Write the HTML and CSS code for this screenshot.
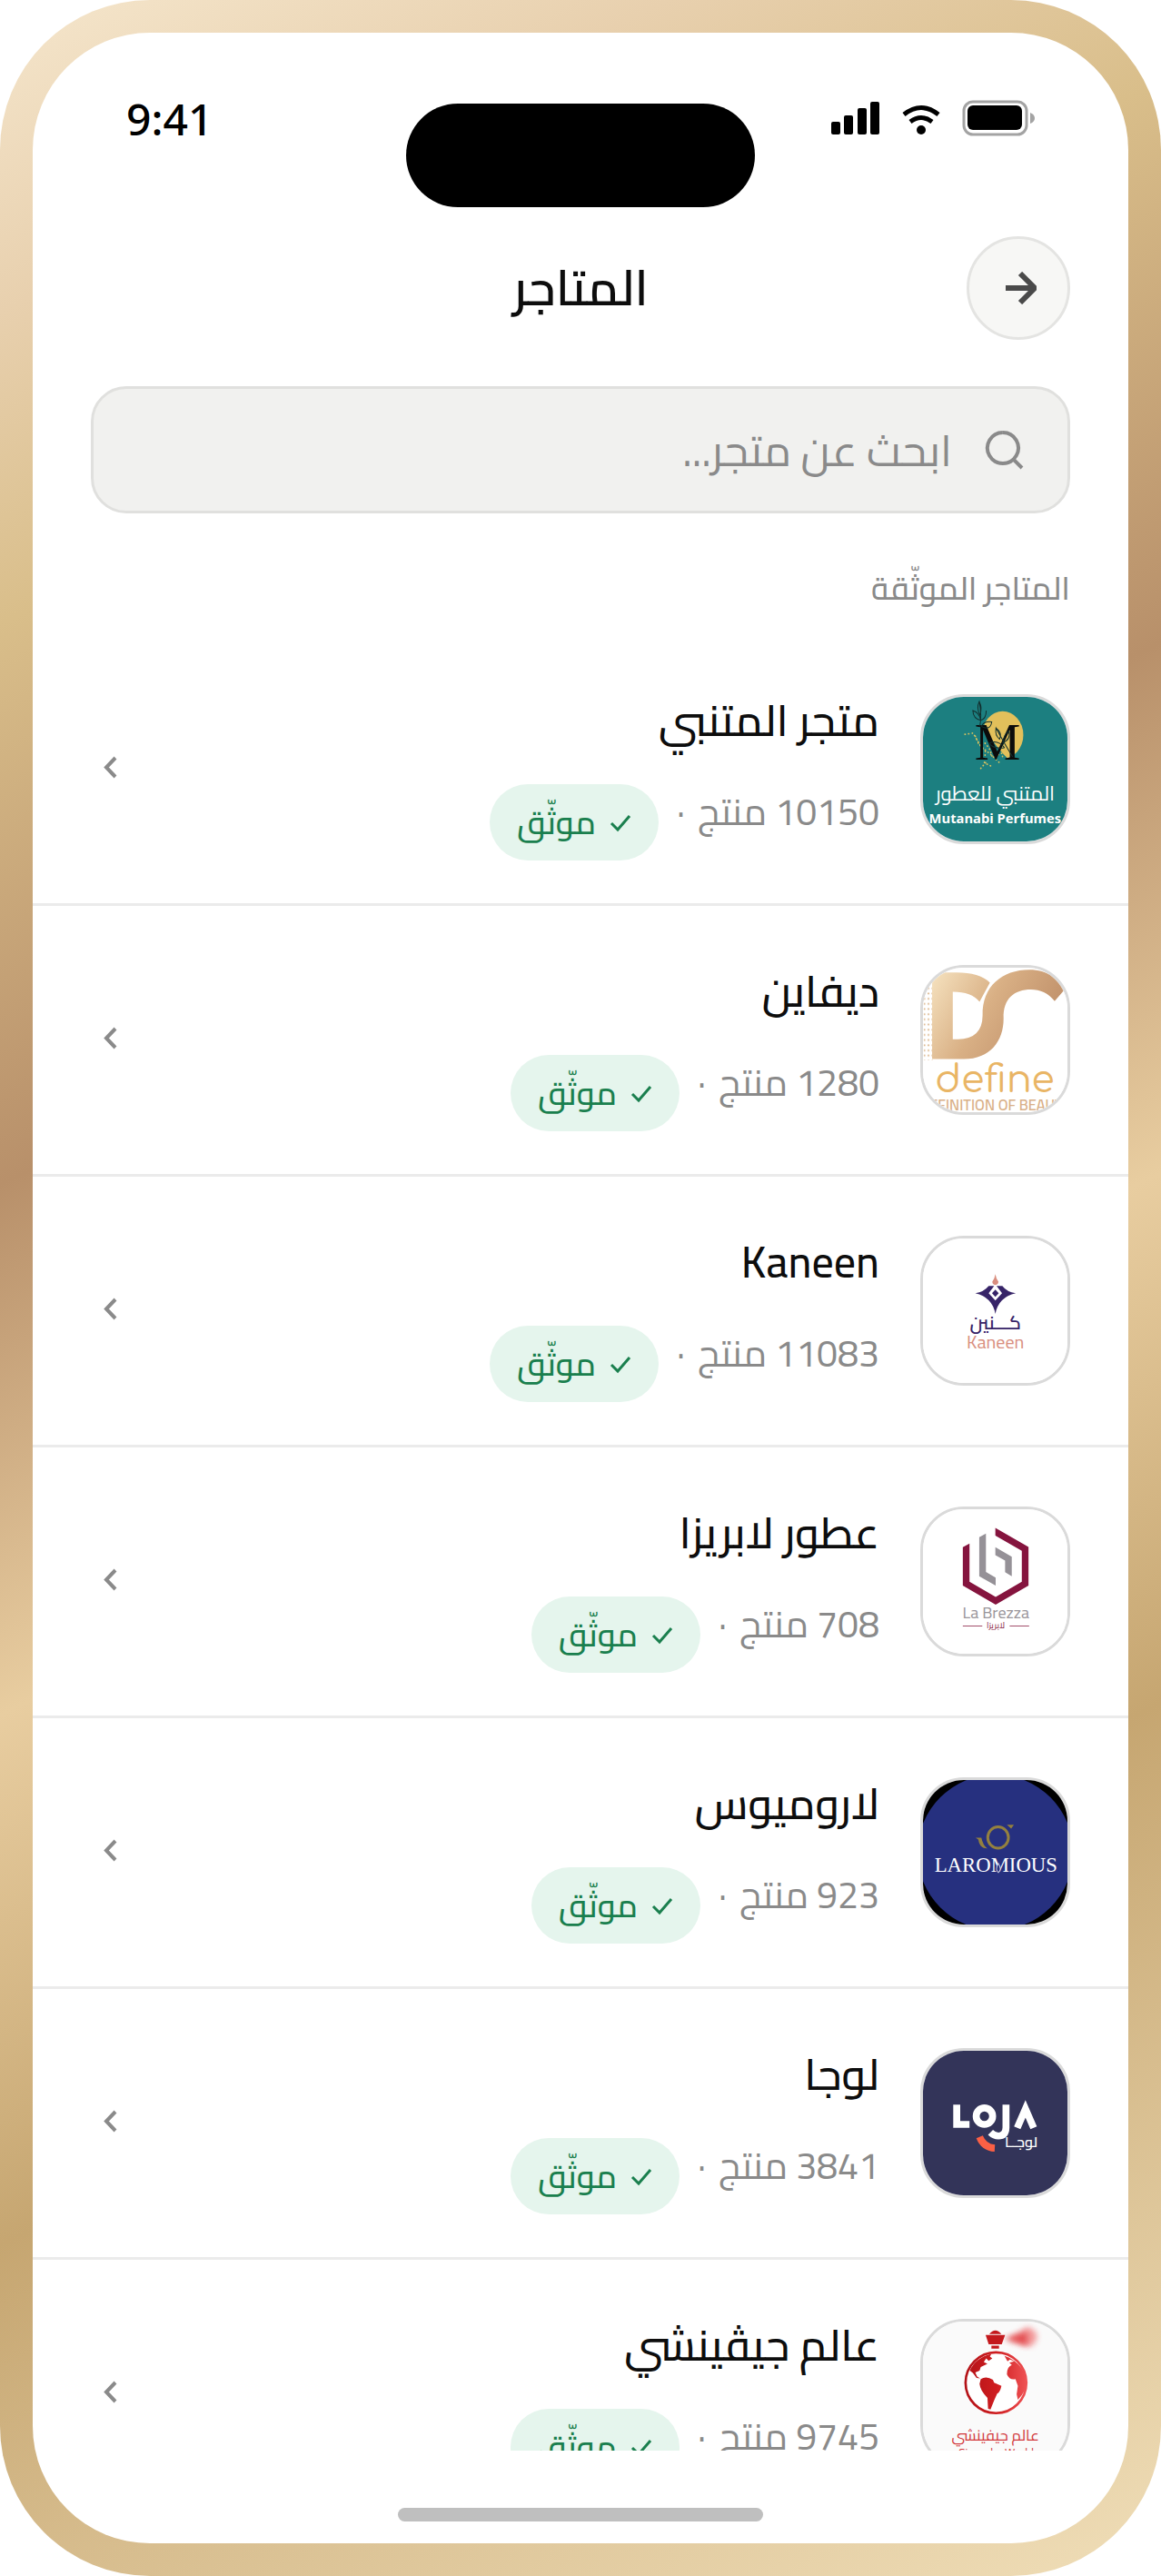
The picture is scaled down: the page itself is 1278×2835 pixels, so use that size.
FILE: index.html
```html
<!DOCTYPE html>
<html lang="ar" dir="rtl">
<head>
<meta charset="UTF-8" />
<meta name="viewport" content="width=device-width, initial-scale=1" />
<title>المتاجر</title>
<link rel="stylesheet" href="styles.css">
</head>
<body>

<svg class="sprite" aria-hidden="true">
  <symbol id="icon-check" viewBox="0 0 24 24"><path d="M2 13 L9 20 L22 5" fill="none" stroke="currentColor" stroke-width="3" /></symbol>
  <symbol id="icon-chevron" viewBox="0 0 15 25"><path d="M13 2 L3 12.5 L13 23" fill="none" stroke="currentColor" stroke-width="4" /></symbol>
</svg>

<div class="phone">
  <div class="screen">

    <div class="status-bar" dir="ltr">
      <span class="time">9:41</span>
      <div class="status-icons">
        <svg width="54" height="36" viewBox="0 0 54 36">
          <rect x="0" y="22" width="10" height="14" rx="2" />
          <rect x="14" y="15" width="10" height="21" rx="2" />
          <rect x="29" y="7" width="10" height="29" rx="2" />
          <rect x="43" y="0" width="10" height="36" rx="2" />
        </svg>
        <svg width="42" height="36" viewBox="0 0 42 36">
          <path d="M2 14 Q21 -1 40 14 M9 22 Q21 13 33 22" fill="none" stroke="#000" stroke-width="5" />
          <circle cx="21" cy="31" r="5" />
        </svg>
        <svg width="80" height="40" viewBox="0 0 80 40">
          <rect x="2" y="2" width="69" height="36" rx="10" fill="none" stroke="#a3a3a3" stroke-width="3" />
          <rect x="6" y="6" width="60" height="27" rx="6" />
          <path d="M75 14 Q80 16 80 20 Q80 24 75 26Z" fill="#a3a3a3" />
        </svg>
      </div>
      <div class="island"></div>
    </div>

    <header class="top-bar">
      <button class="back-btn" type="button" aria-label="رجوع">
        <svg width="40" height="36" viewBox="-6 0 40 36"><path d="M0 18 H31 M16 2 L32 18 L16 34" fill="none" stroke="currentColor" stroke-width="6" /></svg>
      </button>
      <h1>المتاجر</h1>
    </header>

    <label class="search-box">
      <svg width="43" height="43" viewBox="0 0 43 43"><path d="M20 2 A17 17 0 1 1 19.900 2 M32 32 L41 41" fill="none" stroke="currentColor" stroke-width="4" /></svg>
      <input type="search" placeholder="ابحث عن متجر..." aria-label="ابحث عن متجر" />
    </label>

    <h2 class="section-label">المتاجر الموثّقة</h2>

    <main class="store-list">
      <a class="store" href="#mutanabi">
        <svg class="logo" viewBox="50 53 475 475">
          <rect x="50" y="53" width="475" height="475" fill="#1c7f80" />
          <ellipse cx="312" cy="178" rx="68" ry="78" fill="#e2c05b" />
          <path d="M240 100 Q250 180 335 262 L230 262 L215 110Z" fill="#1c7f80" />
          <g fill="none" stroke="#d9c25e" stroke-width="5" stroke-linecap="round" stroke-dasharray="1 11">
            <path d="M188 176 L215 172 L240 215 L270 240 L300 268" />
            <path d="M222 182 L232 205 L255 232 L252 270 L282 284" />
            <path d="M254 205 L268 222 L278 250 L310 238 L312 252 M240 288 L262 262" />
          </g>
          <text x="295" y="260" class="mark-m">M</text>
          <g fill="none" stroke="#12302f" stroke-width="3">
            <path d="M237 150 Q244 115 235 68 Q225 90 237 112 Q246 90 235 68 M240 130 Q215 125 214 98 Q236 105 240 130 Q258 125 258 98 M242 150 Q272 165 276 135 Q250 132 242 150" />
            <path d="M345 250 Q320 210 290 155 Q286 180 302 192 Q312 172 290 155 M310 205 Q340 195 332 165 Q312 180 314 210 M318 220 Q280 225 268 205 Q296 192 318 220" />
          </g>
          <text x="287" y="394" class="mark-white">المتنبي للعطور</text>
          <text x="287" y="468" class="mark-mutanabi">Mutanabi Perfumes</text>
        </svg>
        <div class="info">
          <h3>متجر المتنبي</h3>
          <p><span class="count">10150 منتج</span><span class="dot">·</span><span class="badge"><svg><use href="#icon-check" /></svg>موثّق</span></p>
        </div>
        <svg class="chevron"><use href="#icon-chevron" /></svg>
      </a>

      <a class="store" href="#define">
        <svg class="logo" viewBox="50 48 475 475">
          <defs>
            <linearGradient id="define-gold" x1="0" y1="0" x2="1" y2="0.400">
              <stop offset="0" stop-color="#f6e3c0" />
              <stop offset="0.500" stop-color="#d9b085" />
              <stop offset="1" stop-color="#c0906a" />
            </linearGradient>
            <pattern id="define-dots" x="52" y="112" width="13" height="17" patternUnits="userSpaceOnUse"><circle cx="3" cy="4" r="3" fill="#dcb78d" /></pattern>
          </defs>
          <rect x="50" y="48" width="475" height="475" fill="#fff" />
          <rect x="52" y="112" width="30" height="240" fill="url(#define-dots)" />
          <path d="M80 92 Q95 65 120 64 H160 Q235 64 270 97 L236 160 Q210 127 148 127 V283 H165 Q245 283 246 205 C244 110 310 55 400 55 C460 55 498 85 514 122 L483 158 C462 132 435 120 405 120 C350 120 313 150 315 215 C315 290 270 348 185 348 H80Z" fill="url(#define-gold)" />
          <text x="286" y="456" class="mark-define">define</text>
          <text x="288" y="516" class="mark-sub">DEFINITION OF BEAUTY</text>
        </svg>
        <div class="info">
          <h3>ديفاين</h3>
          <p><span class="count">1280 منتج</span><span class="dot">·</span><span class="badge"><svg><use href="#icon-check" /></svg>موثّق</span></p>
        </div>
        <svg class="chevron"><use href="#icon-chevron" /></svg>
      </a>

      <a class="store" href="#kaneen">
        <svg class="logo" viewBox="50 42 475 475">
          <rect x="50" y="42" width="475" height="475" fill="#fff" />
          <path d="M288 159 Q290 172 298 184 Q298 194 288 195 Q278 194 278 184 Q286 172 288 159Z" fill="#d98f80" />
          <path d="M222 222 Q250 218 266 198 H284 L266 222 L288 246 L310 222 L292 198 H311 Q326 218 355 222 Q298 235 288 290 Q278 235 222 222Z" fill="#372468" />
          <path d="M288 210 L299 222 L288 234 L277 222Z" fill="#372468" />
          <text x="288" y="340" class="mark-kaneen-ar">كـــنين</text>
          <text x="288" y="402" class="mark-kaneen">Kaneen</text>
        </svg>
        <div class="info">
          <h3>Kaneen</h3>
          <p><span class="count">11083 منتج</span><span class="dot">·</span><span class="badge"><svg><use href="#icon-check" /></svg>موثّق</span></p>
        </div>
        <svg class="chevron"><use href="#icon-chevron" /></svg>
      </a>

      <a class="store" href="#labrezza">
        <svg class="logo" viewBox="50 37 475 475">
          <rect x="50" y="37" width="475" height="475" fill="#fff" />
          <path d="M181 162 L203 150 V275 L289 325 L375 275 V174 L288 124 V98 L397 161 V288 L289 351 L181 288Z" fill="#85143e" />
          <path d="M235 129 L257 117 V243 L289 262 V288 L235 257Z M288 162 L342 193 V257 L320 244 V206 L288 188Z" fill="#959197" />
          <text x="290" y="396" class="mark-brezza">La Brezza</text>
          <text x="289" y="427" class="mark-brezza-ar">لابريزا</text>
          <path d="M181 421 H245 M335 421 H399" stroke="#a24e6b" stroke-width="3" />
        </svg>
        <div class="info">
          <h3>عطور لابريزا</h3>
          <p><span class="count">708 منتج</span><span class="dot">·</span><span class="badge"><svg><use href="#icon-check" /></svg>موثّق</span></p>
        </div>
        <svg class="chevron"><use href="#icon-chevron" /></svg>
      </a>

      <a class="store" href="#laromious">
        <svg class="logo" viewBox="50 48 475 475">
          <rect x="50" y="48" width="475" height="475" fill="#000" />
          <circle cx="288" cy="286" r="256" fill="#26307f" />
          <ellipse cx="297" cy="237" rx="34" ry="35" fill="none" stroke="#93803f" stroke-width="9" />
          <path d="M223 238 H242 Q248 265 262 273 Q236 274 232 244Z M326 195 H349 L340 208Z" fill="#93803f" />
          <text x="290" y="349" class="mark-laromious">LAROMIOUS</text>
          <path d="M298 322 Q286 342 298 352 Q310 342 298 322Z" fill="#26307f" stroke="#c9cbe0" stroke-width="3" />
        </svg>
        <div class="info">
          <h3>لاروميوس</h3>
          <p><span class="count">923 منتج</span><span class="dot">·</span><span class="badge"><svg><use href="#icon-check" /></svg>موثّق</span></p>
        </div>
        <svg class="chevron"><use href="#icon-chevron" /></svg>
      </a>

      <a class="store" href="#loja">
        <svg class="logo" viewBox="50 42 475 475">
          <rect x="50" y="42" width="475" height="475" fill="#333459" />
          <g fill="none" stroke="#fff" stroke-width="23">
            <path d="M161 219 V284 H203" />
            <circle cx="252" cy="257" r="27" />
            <path d="M323 219 V295 Q322 322 298 322 Q284 322 272 310" />
            <path d="M360 295 L387 233 L414 295" />
          </g>
          <path d="M236 325 Q250 360 286 362" fill="none" stroke="#fb6045" stroke-width="23" />
          <text x="373" y="360" class="mark-loja">لوجــا</text>
        </svg>
        <div class="info">
          <h3>لوجا</h3>
          <p><span class="count">3841 منتج</span><span class="dot">·</span><span class="badge"><svg><use href="#icon-check" /></svg>موثّق</span></p>
        </div>
        <svg class="chevron"><use href="#icon-chevron" /></svg>
      </a>

      <a class="store" href="#givenchy-world">
        <svg class="logo" viewBox="50 51 475 475">
          <defs>
            <linearGradient id="globe-red" gradientUnits="userSpaceOnUse" x1="190" y1="0" x2="395" y2="0">
              <stop offset="0" stop-color="#b31217" />
              <stop offset="0.500" stop-color="#cf1d20" />
              <stop offset="1" stop-color="#f05456" />
            </linearGradient>
            <filter id="spray-blur" x="-50%" y="-50%" width="200%" height="200%"><feGaussianBlur stdDeviation="9" /></filter>
          </defs>
          <rect x="50" y="51" width="475" height="475" fill="#fafafa" />
          <path d="M322 108 Q365 88 392 68 Q430 80 424 108 Q412 140 386 130 Q355 120 322 108Z" fill="#ee5a5c" opacity="0.600" filter="url(#spray-blur)" />
          <path d="M318 107 L392 86 V130Z" fill="#df3b3e" opacity="0.800" filter="url(#spray-blur)" />
          <path d="M268 92 Q288 68 308 92Z M256 95 H320 L309 126 H266Z M275 130 H300 V140 H275Z" fill="#c4191d" />
          <circle cx="290" cy="252" r="100" fill="#fff" stroke="url(#globe-red)" stroke-width="8" />
          <path d="M204 212 Q222 170 275 157 L270 166 L278 172 L266 180 L258 172 L250 184 L262 190 L240 200 L236 212 L222 218 L228 232 L238 238 L226 236 L214 220Z M240 240 Q258 228 280 242 L284 252 L308 262 Q304 282 294 288 L284 310 L272 340 L264 338 L262 302 Q238 278 236 256Z M318 164 Q375 184 391 240 Q392 280 362 308 L358 290 L362 262 L354 240 Q334 244 326 224 Q326 200 342 194 L334 186 L350 182 L336 176 L328 182Z" fill="url(#globe-red)" />
          <text x="288" y="442" class="mark-world">عالم جيفينشي</text>
          <text x="290" y="495" class="mark-world-en">Givenchy World</text>
        </svg>
        <div class="info">
          <h3>عالم جيڤينشي</h3>
          <p><span class="count">9745 منتج</span><span class="dot">·</span><span class="badge"><svg><use href="#icon-check" /></svg>موثّق</span></p>
        </div>
        <svg class="chevron"><use href="#icon-chevron" /></svg>
      </a>
    </main>

    <div class="home-bar"></div>
  </div>
</div>

</body>
</html>
```

FILE: styles.css
```css
/* Reset & base */
*, *::before, *::after {
  box-sizing: border-box;
}
body {
  margin: 0;
  background: #fff;
  color: #0d0d0d;
  font-family: Cairo, "Noto Sans", "DejaVu Sans", sans-serif;
}
h1, h2, h3, p {
  margin: 0;
  font-weight: 400;
}
svg {
  display: block;
  flex: none;
}
.sprite {
  position: absolute;
  width: 0;
  height: 0;
}

/* Phone frame */
.phone {
  height: 100vh;
  padding: 36px;
  border-radius: 165px;
  background: linear-gradient(155deg, #f5e6cc 0%, #e8d0ae 10%, #d9be8a 20%, #b8906a 38%, #e8cda0 55%, #c6a671 72%, #f0deb8 100%);
}
.screen {
  height: 100%;
  display: flex;
  flex-direction: column;
  overflow: hidden;
  border-radius: 129px;
  background: #fff;
}

/* Status bar */
.status-bar {
  position: relative;
  display: flex;
  justify-content: space-between;
  padding: 61px 103px 65px;
}
.time {
  color: #000;
  font-family: "Noto Sans", "Open Sans", sans-serif;
  font-size: 48px;
  font-weight: 500;
  line-height: 68px;
  height: 66px;
}
.status-icons {
  display: flex;
  align-items: center;
  gap: 24px;
}
.island {
  position: absolute;
  top: 78px;
  left: 50%;
  width: 384px;
  height: 114px;
  border-radius: 57px;
  background: #000;
  transform: translateX(-50%);
}

/* Header */
.top-bar {
  display: grid;
  grid-template-columns: 114px 1fr 114px;
  align-items: center;
  padding: 32px 64px 51px;
}
.top-bar h1 {
  text-align: center;
  font-size: 54px;
  font-weight: 600;
  line-height: 84px;
}
.back-btn {
  width: 114px;
  height: 114px;
  display: flex;
  align-items: center;
  justify-content: center;
  padding: 0;
  border: 3px solid #e4e4e2;
  border-radius: 50%;
  background: #f7f7f5;
  color: #4a4a4a;
}

/* Search */
.search-box {
  height: 140px;
  flex: none;
  display: flex;
  align-items: center;
  gap: 36px;
  margin: 0 64px;
  padding: 0 48px;
  border: 3px solid #e0e0de;
  border-radius: 39px;
  background: #f1f1ef;
  color: #8a8a8a;
}
.search-box input {
  flex: 1;
  min-width: 0;
  padding: 0;
  border: none;
  outline: none;
  background: none;
  color: inherit;
  font-family: inherit;
  font-size: 48px;
}
.search-box input::placeholder {
  color: #8a8a8a;
  opacity: 1;
}

.section-label {
  padding: 52px 64px 22px;
  color: #8a8a8a;
  font-size: 35px;
  font-weight: 500;
  line-height: 60px;
}

/* Store list */
.store-list {
  flex: 1;
  min-height: 0;
  overflow: hidden;
}
.store {
  height: 298px;
  display: flex;
  align-items: center;
  gap: 45px;
  padding: 0 64px 0 78px;
  border-bottom: 3px solid #ebebeb;
  color: inherit;
  text-decoration: none;
}
.logo {
  width: 165px;
  height: 165px;
  border: 3px solid #dadada;
  border-radius: 48px;
  overflow: hidden;
}
.info {
  flex: 1;
}
.info h3 {
  margin-bottom: 25px;
  font-size: 48px;
  font-weight: 500;
  line-height: 92px;
}
.info p {
  display: flex;
  align-items: flex-start;
  color: #8a8a8a;
  font-size: 41px;
  line-height: 60px;
}
.dot {
  margin: 0 14px 0 20px;
}
.badge {
  height: 84px;
  display: flex;
  align-items: center;
  gap: 15px;
  padding: 0 30px;
  border-radius: 42px;
  background: #e5f5ed;
  color: #1a7f4e;
  font-size: 36px;
  font-weight: 500;
}
.badge svg {
  width: 24px;
  height: 24px;
}
.chevron {
  width: 15px;
  height: 25px;
  margin-bottom: 4px;
  color: #8a8a8a;
}

/* Store logos */
.logo text {
  text-anchor: middle;
}
.mark-m {
  fill: #0b0b0b;
  font-family: "Liberation Serif", serif;
  font-size: 170px;
}
.mark-white {
  fill: #fff;
  font-size: 66px;
}
.mark-mutanabi {
  fill: #fff;
  font-family: "Open Sans", "Noto Sans", sans-serif;
  font-size: 44px;
  font-weight: 700;
}
.mark-define {
  fill: #e9b565;
  font-family: Comfortaa, Quicksand, Lato, sans-serif;
  font-size: 122px;
}
.mark-sub {
  fill: #d9b087;
  font-size: 49px;
  font-weight: 600;
}
.mark-kaneen-ar {
  fill: #372468;
  font-size: 62px;
  font-weight: 600;
}
.mark-kaneen {
  fill: #d98f80;
  font-size: 60px;
}
.mark-brezza {
  fill: #9a969b;
  font-size: 54px;
}
.mark-brezza-ar {
  fill: #85143e;
  font-size: 28px;
}
.mark-laromious {
  fill: #fff;
  font-family: "Liberation Serif", serif;
  font-size: 68px;
}
.mark-loja {
  fill: #fff;
  font-size: 48px;
  font-weight: 600;
}
.mark-world {
  fill: #d2383b;
  font-size: 50px;
}
.mark-world-en {
  fill: #d2383b;
  font-size: 38px;
}

/* Home indicator */
.home-bar {
  width: 402px;
  height: 15px;
  flex: none;
  margin: 63px auto 24px;
  border-radius: 8px;
  background: #bfbfbf;
}
```
